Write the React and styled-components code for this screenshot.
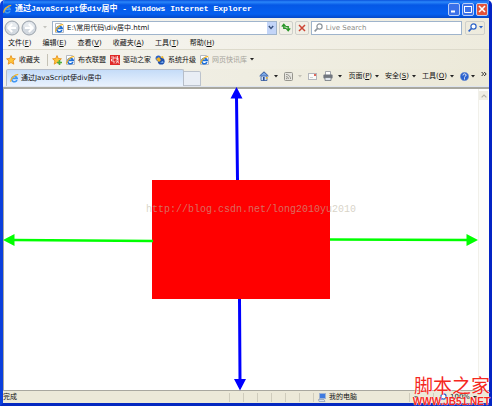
import styled, { createGlobalStyle } from 'styled-components';

const GlobalStyle = createGlobalStyle`
  * {
    box-sizing: border-box;
  }

  body {
    margin: 0;
    background: #fff;
    color: #111;
    font-family: "DejaVu Sans", "Noto Sans CJK SC", sans-serif;
    font-size: 7px;
    line-height: 10px;
  }

  button, input {
    margin: 0;
    padding: 0;
    border: none;
    background: none;
    color: inherit;
    font: inherit;
  }

  svg {
    display: block;
    flex: none;
  }
`;

const Window = styled.div`
  display: flex;
  flex-direction: column;
  height: calc(100vh - 1px);
  border: 3px solid #0a3fdc;
  border-top: none;
  border-right-color: #0424c4;
  border-bottom-color: #0428c0;
  border-radius: 5px 5px 0 0;
  background: #efede2;
  overflow: hidden;
  white-space: nowrap;
`;

const TitleBar = styled.header`
  display: flex;
  align-items: center;
  gap: 3px;
  height: 18px;
  flex: none;
  background: linear-gradient(#0a52dc, #2a86fa 2px, #0558e6 5px, #0560f0 14px, #0448c8);
`;

const Title = styled.h1`
  flex: 1;
  margin: 0;
  color: #fff;
  font-family: "Liberation Mono", "Noto Sans CJK SC", monospace;
  font-size: 8px;
  font-weight: bold;
`;

const WindowButton = styled.button`
  display: flex;
  align-items: center;
  justify-content: center;
  width: 12px;
  height: 13px;
  border: 1px solid #b8cdf8;
  border-radius: 2px;
  background: ${(props) => (props.$close ? '#e2533a' : '#3a70e8')};
`;

const WindowButtons = styled.div`
  display: flex;
  gap: 2px;
  padding-right: 1px;
`;

const NavBar = styled.div`
  display: flex;
  align-items: center;
  gap: 2px;
  height: 19px;
  flex: none;
  padding: 0 4px 0 2px;
  background: linear-gradient(90deg, #f5f5f3, #eeebdd);
`;

const IconButton = styled.button`
  display: flex;
  align-items: center;
  justify-content: center;
  gap: 2px;
  width: ${(props) => props.$width || 14}px;
  height: 14px;
  flex: none;
  border: ${(props) => (props.$plain ? 'none' : '1px solid #cfd0cb')};
  border-radius: 2px;
`;

const Field = styled.div`
  display: flex;
  align-items: center;
  gap: 3px;
  flex: ${(props) => props.$grow} 1 0;
  min-width: 0;
  height: 14px;
  margin-right: ${(props) => props.$after || 0}px;
  padding-left: 2px;
  border: 1px solid #9fb4cc;
  background: #fff;

  input {
    flex: 1;
    min-width: 0;
    height: 10px;
    outline: none;
  }

  input::placeholder {
    color: #8c8c86;
  }
`;

const DropButton = styled.button`
  display: flex;
  align-items: center;
  justify-content: center;
  width: 9px;
  height: 12px;
  background: #c3d5f8;
`;

const MenuBar = styled.nav`
  display: flex;
  align-items: center;
  gap: 11px;
  height: 13px;
  flex: none;
  padding-left: 5px;
  border-bottom: 1px solid #dddacb;
  background: linear-gradient(90deg, #f7f6f3, #eeebdd);
`;

const FavoritesBar = styled.div`
  display: flex;
  align-items: center;
  gap: 4px;
  height: 19px;
  flex: none;
  padding-left: 3px;
  background: linear-gradient(90deg, #f5f4ef, #ece9d9);
`;

const Divider = styled.span`
  width: 1px;
  height: 12px;
  margin-left: 3px;
  background: #c5c2b5;
`;

const FavoriteLink = styled.a`
  display: flex;
  align-items: center;
  gap: 3px;
  color: ${(props) => (props.$faded ? '#a5a39a' : 'inherit')};
  text-decoration: none;
`;

const FavoriteButton = styled(FavoriteLink).attrs({ as: 'button' })``;

const TabRow = styled.div`
  display: flex;
  align-items: flex-end;
  height: 18px;
  flex: none;
  padding: 0 2px 0 3px;
  background: linear-gradient(90deg, #f2f1ea, #ece9d8);
  border-bottom: 1px solid #dfe5ee;
`;

const Tab = styled.button`
  display: flex;
  align-items: center;
  gap: 2px;
  flex: 0 1 178px;
  height: 17px;
  padding-left: 3px;
  border: 1px solid #b6bdc8;
  border-bottom: none;
  border-radius: 2px 2px 0 0;
  background: linear-gradient(#c5dcf8, #e9f2fd);
`;

const NewTab = styled.button`
  width: 17px;
  height: 15px;
  border: 1px solid #bcc3cd;
  border-left: none;
  border-radius: 0 2px 0 0;
  background: #e9eef5;
`;

const Commands = styled.div`
  display: flex;
  align-items: center;
  gap: 6px;
  height: 17px;
  margin-left: auto;
  padding-bottom: 3px;
`;

const Command = styled.button`
  display: flex;
  align-items: center;
  gap: ${(props) => props.$gap || 3}px;
`;

const Viewport = styled.div`
  display: flex;
  flex: 1;
  min-height: 0;
  border-top: 2px solid #a9a89f;
  border-left: 1px solid #a9a89f;
  background: #fff;
`;

const Page = styled.main`
  position: relative;
  display: flex;
  align-items: center;
  justify-content: center;
  flex: 1;
`;

const RedBox = styled.div`
  display: flex;
  justify-content: center;
  width: 178px;
  height: 119px;
  padding-top: 23px;
  background: #f00;
`;

const Watermark = styled.span`
  flex: none;
  margin-left: 20px;
  color: rgba(190, 182, 162, 0.6);
  font-family: "Liberation Mono", monospace;
  font-size: 10px;
  line-height: 14px;
`;

const Arrows = styled.svg`
  position: absolute;
  inset: 0;
  width: 100%;
  height: 100%;
  overflow: visible;
`;

const ScrollBar = styled.div`
  width: 11px;
  padding-top: 2px;
  border-left: 1px solid #f1f0ea;
  background: #fdfdfb;
`;

const ScrollButton = styled.button`
  display: flex;
  align-items: center;
  justify-content: center;
  width: 9px;
  height: 9px;
  background: #efede4;
`;

const StatusBar = styled.footer`
  display: flex;
  align-items: center;
  height: 13px;
  flex: none;
  border-top: 1px solid #a9a89f;
  background: #ece9d8;
`;

const StatusText = styled.span`
  flex: 1;
`;

const StatusCell = styled.span`
  display: flex;
  align-items: center;
  gap: 3px;
  width: ${(props) => props.$width}px;
  height: 9px;
  padding-left: 4px;
  border-left: 1px solid #cfccbc;
`;

const SiteMark = styled.div`
  position: absolute;
  right: 2px;
  bottom: 0;
  display: flex;
  flex-direction: column;
  align-items: flex-end;
  gap: 2px;
  color: #f5281e;
  text-shadow: 0 0 1px #fff, 0 0 1px #fff;
  white-space: nowrap;
`;

const SiteName = styled.span`
  font-family: "Noto Sans CJK SC", sans-serif;
  font-size: 19px;
  line-height: 20px;
`;

const SiteUrl = styled.span`
  font-family: "Liberation Sans", sans-serif;
  font-size: 10px;
  font-weight: bold;
  line-height: 10px;
`;

const Caret = ({ color = '#222' }) => (
  <svg width="4" height="3" viewBox="0 0 4 3">
    <path d="M0 0h4L2 2.5z" fill={color} />
  </svg>
);

const IeIcon = ({ page }) => (
  <svg width="9" height="10" viewBox="0 0 9 10">
    {page && <path d="M.5.5h6l2 2v7h-8z" fill="#fff" stroke="#b4b9c2" />}
    <path d="M7 7.2A2.8 2.8 0 1 1 7.2 5.4H2.2" fill="none" stroke={page ? '#1d6fd8' : '#3f97f4'} strokeWidth="1.6" />
    <path d="M1 8.8C-.2 6.5 4.5 1.4 8.2 1.4" fill="none" stroke="#efb32c" strokeWidth="1.2" />
  </svg>
);

const StarIcon = ({ plus }) => (
  <svg width="10" height="10" viewBox="0 0 10 10">
    <path d="M5 .6l1.3 2.9 3.1.3-2.3 2.1.7 3.3L5 7.5 2.2 9.2l.7-3.3L.6 3.8l3.1-.3z" fill="#ffc53a" stroke="#e58a14" strokeWidth=".8" />
    {plus && <path d="M5 7.5h5M7.5 5v5" stroke="#4fae3f" strokeWidth="1.6" />}
  </svg>
);

const RoundArrow = ({ flip }) => (
  <svg width="16" height="16" viewBox="0 0 16 16">
    <circle cx="8" cy="8" r="7" fill="#d3d9e0" stroke="#9aa2ab" />
    <path d="M2.5 7a5.5 5 0 0 1 11 0z" fill="#e6eaee" />
    <path
      d="M8.2 4L4.2 8l4 4M4.6 8h7.6"
      fill="none"
      stroke="#fff"
      strokeWidth="2"
      transform={flip ? 'translate(16 0) scale(-1 1)' : undefined}
    />
  </svg>
);

const SearchIcon = ({ color }) => (
  <svg width="9" height="9" viewBox="0 0 9 9">
    <circle cx="5.5" cy="3.5" r="2.6" fill="#fff" stroke={color} strokeWidth="1.2" />
    <path d="M3.6 5.4L.6 8.4" stroke={color} strokeWidth="1.6" />
  </svg>
);

const RefreshIcon = () => (
  <svg width="10" height="9" viewBox="0 0 10 9">
    <path d="M5 5.2H2.8V2M.8 3.6l2-2.200 2 2.200" fill="none" stroke="#2a9628" strokeWidth="1.4" />
    <path d="M5 3.600h2.200V7M5.200 5.400l2 2.200 2-2.200" fill="none" stroke="#2a9628" strokeWidth="1.4" />
  </svg>
);

const StopIcon = () => (
  <svg width="8" height="8" viewBox="0 0 8 8">
    <path d="M1 1l6 6M7 1L1 7" stroke="#cc4433" strokeWidth="1.5" />
  </svg>
);

const DriverIcon = () => (
  <svg width="10" height="10" viewBox="0 0 10 10">
    <rect width="10" height="10" fill="#e02a28" />
    <path d="M1 2h3v2H1.5v2H4v2.5M6 1.5v2.5h3M7.5 1v4M5.5 6h3.5M6 8.5l1.5-2 1.5 2" fill="none" stroke="#fff" strokeWidth=".8" />
  </svg>
);

const UpgradeIcon = () => (
  <svg width="10" height="10" viewBox="0 0 10 10">
    <circle cx="3.4" cy="3.2" r="2.8" fill="#2b63c8" />
    <circle cx="6.2" cy="6.2" r="3.4" fill="#1d4fae" />
    <path d="M1 4l3-2 2 3-2 2zM5 2l3-1 .8 3z" fill="#f0b429" />
    <path d="M5 7.5l3-1.5.5 2z" fill="#7fb4f0" />
  </svg>
);

const HomeIcon = () => (
  <svg width="10" height="10" viewBox="0 0 10 10">
    <path d="M.6 5L5 .8 9.4 5" fill="#7ca8e6" stroke="#31589e" />
    <path d="M2 5h6v4.5H2z" fill="#cfe0f7" stroke="#31589e" strokeWidth=".8" />
    <path d="M4 6h1.6v3.5H4z" fill="#274b92" />
    <path d="M7 6h1.6v1.8H7z" fill="#e9b63a" />
  </svg>
);

const FeedIcon = () => (
  <svg width="9" height="9" viewBox="0 0 9 9">
    <rect x=".5" y=".5" width="8" height="8" rx="1" fill="#e6e5df" stroke="#97968e" />
    <path d="M2 2.4a4.6 4.6 0 0 1 4.6 4.6M2 4.5A2.5 2.5 0 0 1 4.5 7" fill="none" stroke="#97968e" />
    <circle cx="2.6" cy="6.5" r=".7" fill="#97968e" />
  </svg>
);

const MailIcon = () => (
  <svg width="9" height="7" viewBox="0 0 9 7">
    <rect x=".5" y=".5" width="8" height="6" fill="#fbfbf9" stroke="#b3b6bb" />
    <rect x="6" y="1" width="2" height="2" fill="#e0665a" />
    <path d="M2 4.5h3" stroke="#c5c8cc" strokeWidth=".8" />
  </svg>
);

const PrinterIcon = () => (
  <svg width="10" height="10" viewBox="0 0 10 10">
    <path d="M2.5.5h5v4h-5z" fill="#fff" stroke="#8d9299" strokeWidth=".8" />
    <rect x=".4" y="3.6" width="9.2" height="4" rx="1" fill="#71767e" />
    <path d="M2 6.5h6v3H2z" fill="#dfe5ec" stroke="#71767e" strokeWidth=".8" />
  </svg>
);

const HelpIcon = () => (
  <svg width="9" height="9" viewBox="0 0 9 9">
    <circle cx="4.5" cy="4.5" r="4.2" fill="#2b62cf" stroke="#7f9bd0" strokeWidth=".6" />
    <path d="M3 3.4c0-2 3-2 3-.1 0 1-1.5 1-1.5 2.2M4.5 6.3v1.1" fill="none" stroke="#fff" />
  </svg>
);

const ComputerIcon = () => (
  <svg width="8" height="9" viewBox="0 0 8 9">
    <rect x="1.5" y=".5" width="6" height="5" fill="#3f7be0" stroke="#9fb3d3" />
    <path d="M.5 6.5h5.5l1 2h-6z" fill="#dbe3ee" stroke="#8595b0" strokeWidth=".7" />
  </svg>
);

const menus = [
  ['文件', 'F'],
  ['编辑', 'E'],
  ['查看', 'V'],
  ['收藏夹', 'A'],
  ['工具', 'T'],
  ['帮助', 'H'],
];

const favorites = [
  { name: '布衣联盟', icon: <IeIcon page /> },
  { name: '驱动之家', icon: <DriverIcon /> },
  { name: '系统升级', icon: <UpgradeIcon /> },
  { name: '网页快讯库', icon: <IeIcon page />, faded: true },
];

const pageCommands = [
  ['页面', 'P'],
  ['安全', 'S'],
  ['工具', 'O'],
];

const App = () => (
  <>
    <GlobalStyle />
    <Window>
      <TitleBar>
        <IeIcon />
        <Title>通过JavaScript使div居中 - Windows Internet Explorer</Title>
        <WindowButtons>
          <WindowButton aria-label="最小化">
            <svg width="8" height="8" viewBox="0 0 8 8"><path d="M1 6.5h4" stroke="#fff" strokeWidth="2" /></svg>
          </WindowButton>
          <WindowButton aria-label="最大化">
            <svg width="8" height="8" viewBox="0 0 8 8"><path d="M.5 1.5h7M.5 1v6.5h7V1" fill="none" stroke="#fff" /></svg>
          </WindowButton>
          <WindowButton $close aria-label="关闭">
            <svg width="8" height="8" viewBox="0 0 8 8"><path d="M1 1l6 6M7 1L1 7" stroke="#fff" strokeWidth="1.6" /></svg>
          </WindowButton>
        </WindowButtons>
      </TitleBar>

      <NavBar>
        <IconButton $plain aria-label="后退"><RoundArrow /></IconButton>
        <IconButton $plain $width={16} aria-label="前进"><RoundArrow flip /></IconButton>
        <IconButton $plain $width={11} aria-label="最近的页面"><Caret color="#c4c4bf" /></IconButton>
        <Field $grow={3}>
          <IeIcon page />
          <input aria-label="地址" defaultValue="E:\常用代码\div居中.html" />
          <DropButton aria-label="显示地址">
            <svg width="6" height="5" viewBox="0 0 6 5"><path d="M.8 1L3 3.4 5.2 1" fill="none" stroke="#38507c" strokeWidth="1.4" /></svg>
          </DropButton>
        </Field>
        <IconButton aria-label="刷新"><RefreshIcon /></IconButton>
        <IconButton aria-label="停止"><StopIcon /></IconButton>
        <Field $grow={2} $after={1}>
          <SearchIcon color="#8d959c" />
          <input aria-label="搜索" placeholder="Live Search" />
        </Field>
        <IconButton $width={20} aria-label="搜索">
          <SearchIcon color="#2c62c8" />
          <Caret color="#2c62c8" />
        </IconButton>
      </NavBar>

      <MenuBar>
        {menus.map(([name, key]) => (
          <button key={key}>{name}(<u>{key}</u>)</button>
        ))}
      </MenuBar>

      <FavoritesBar>
        <FavoriteButton><StarIcon />收藏夹</FavoriteButton>
        <Divider />
        <FavoriteButton aria-label="添加到收藏夹栏"><StarIcon plus /></FavoriteButton>
        {favorites.map((item) => (
          <FavoriteLink key={item.name} href="#" $faded={item.faded}>
            {item.icon}
            {item.name}
            {item.faded && <Caret />}
          </FavoriteLink>
        ))}
      </FavoritesBar>

      <TabRow>
        <Tab><IeIcon />通过JavaScript使div居中</Tab>
        <NewTab aria-label="新选项卡" />
        <Commands>
          <Command $gap={5} aria-label="主页"><HomeIcon /><Caret /></Command>
          <Command $gap={5} aria-label="源"><FeedIcon /><Caret color="#c4c2b8" /></Command>
          <Command aria-label="阅读邮件"><MailIcon /></Command>
          <Command $gap={5} aria-label="打印"><PrinterIcon /><Caret /></Command>
          {pageCommands.map(([name, key]) => (
            <Command key={key}><span>{name}(<u>{key}</u>)</span><Caret /></Command>
          ))}
          <Command $gap={2} aria-label="帮助"><HelpIcon /><Caret /></Command>
          <Command aria-label="更多">
            <svg width="6" height="10" viewBox="0 0 6 10"><path d="M.6 1l2 2-2 2M3.2 1l2 2-2 2" fill="none" stroke="#222" /></svg>
          </Command>
        </Commands>
      </TabRow>

      <Viewport>
        <Page>
          <RedBox>
            <Watermark>http://blog.csdn.net/long2010yu2010</Watermark>
          </RedBox>
          <Arrows viewBox="0 0 474 301" preserveAspectRatio="none">
            <g stroke="#00f" strokeWidth="3" fill="#00f">
              <path d="M232.5 8L233.5 91M235.5 210L236 291" />
              <path d="M232.5-2l6 11.5h-12zM236 301.5l6-11.5h-12z" stroke="none" />
            </g>
            <g stroke="#0f0" strokeWidth="2.4" fill="#0f0">
              <path d="M10 151L149 152M326 150.5L464 151" />
              <path d="M-1 151l11.5-6v12zM474 151l-11.5-6v12z" stroke="none" />
            </g>
          </Arrows>
        </Page>
        <ScrollBar>
          <ScrollButton aria-label="向上滚动">
            <svg width="6" height="4" viewBox="0 0 6 4"><path d="M.6 3.4L3 1l2.4 2.4" fill="none" stroke="#b5b3a9" strokeWidth="1.2" /></svg>
          </ScrollButton>
        </ScrollBar>
      </Viewport>

      <StatusBar>
        <StatusText>完成</StatusText>
        {[1, 2, 3, 4, 5, 6].map((cell) => (
          <StatusCell key={cell} $width={14} />
        ))}
        <StatusCell $width={96}><ComputerIcon />我的电脑</StatusCell>
        <StatusCell $width={24}><Caret color="#777" /></StatusCell>
        <StatusCell $width={56}>
          <SearchIcon color="#2c62c8" />
          100%
          <Caret />
        </StatusCell>
      </StatusBar>
    </Window>
    <SiteMark>
      <SiteName>脚本之家</SiteName>
      <SiteUrl>WWW.JB51.NET</SiteUrl>
    </SiteMark>
  </>
);

export default App;
